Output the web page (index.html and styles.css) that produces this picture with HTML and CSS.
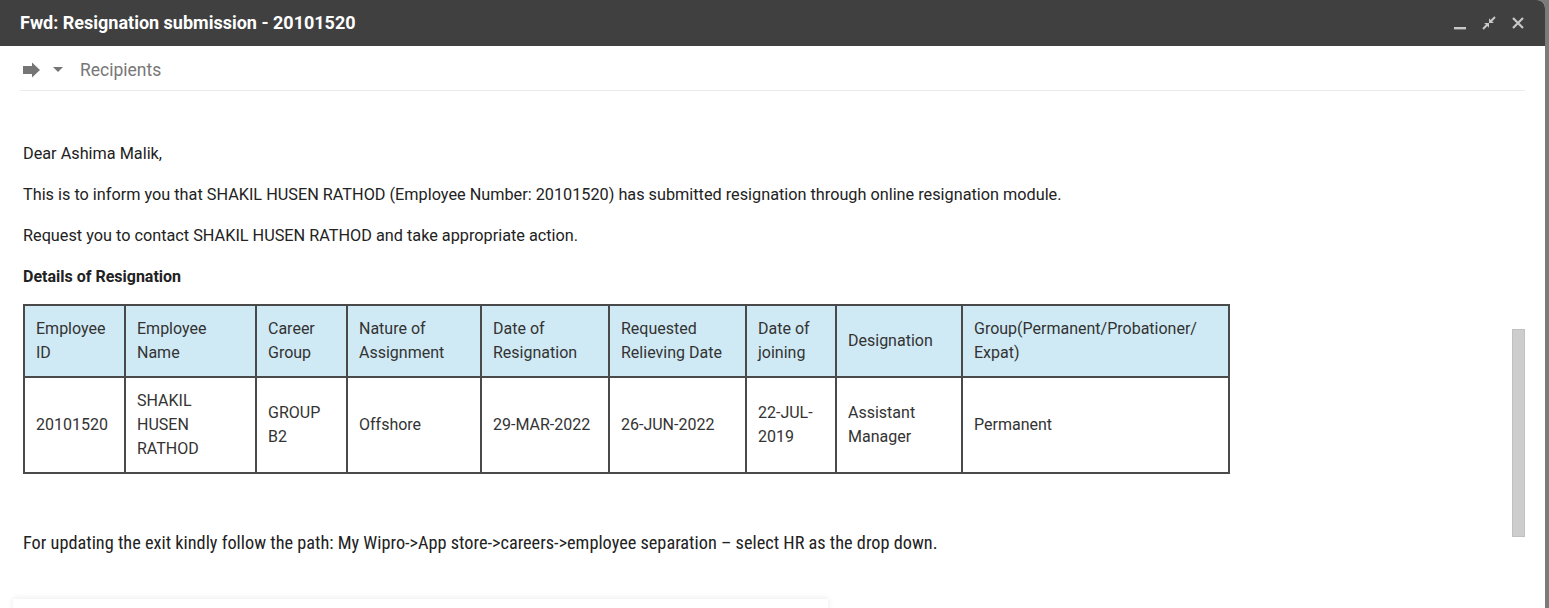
FILE: index.html
```html
<!DOCTYPE html>
<html>
<head>
<meta charset="utf-8">
<link rel="stylesheet" href="styles.css">
</head>
<body>
<div class="window">
  <div class="titlebar">
    <div class="title">Fwd: Resignation submission - 20101520</div>
    <div class="winctl">
      <svg class="ic-min" width="14" height="14" viewBox="0 0 14 14"><rect x="1" y="11" width="12" height="2.4" fill="#c8c8c8"/></svg>
      <svg class="ic-exit" width="14" height="14" viewBox="0 0 14 14"><path d="M13 1 L8.8 5.2" stroke="#c8c8c8" stroke-width="2"/><path d="M7 2.2 L7 7 L11.8 7 Z" fill="#c8c8c8"/><path d="M1 13 L5.2 8.8" stroke="#c8c8c8" stroke-width="2"/><path d="M2.2 7 L7 7 L7 11.8 Z" fill="#c8c8c8"/></svg>
      <svg class="ic-close" width="14" height="14" viewBox="0 0 14 14"><path d="M2 2 L12 12 M12 2 L2 12" stroke="#c8c8c8" stroke-width="2.2"/></svg>
    </div>
  </div>
  <div class="compose">
    <div class="recipients">
      <svg class="ic-fwd" width="20" height="16" viewBox="0 0 20 16"><path d="M1 4 L10 4 L10 0.5 L18 8 L10 15.5 L10 12 L1 12 Z" fill="#757575"/></svg>
      <svg class="ic-caret" width="10" height="6" viewBox="0 0 10 6"><path d="M0 0 L10 0 L5 5 Z" fill="#757575"/></svg>
      <span class="rcpt-label">Recipients</span>
    </div>
    <div class="body-area">
      <div class="message">
        <p>Dear Ashima Malik,</p>
        <p>This is to inform you that SHAKIL HUSEN RATHOD (Employee Number: 20101520) has submitted resignation through online resignation module.</p>
        <p>Request you to contact SHAKIL HUSEN RATHOD and take appropriate action.</p>
        <p class="bold">Details of Resignation</p>
        <table class="details">
          <colgroup>
            <col class="c1"><col class="c2"><col class="c3"><col class="c4"><col class="c5"><col class="c6"><col class="c7"><col class="c8"><col class="c9">
          </colgroup>
          <tr class="head">
            <td>Employee<br>ID</td>
            <td>Employee<br>Name</td>
            <td>Career<br>Group</td>
            <td>Nature of<br>Assignment</td>
            <td>Date of<br>Resignation</td>
            <td>Requested<br>Relieving Date</td>
            <td>Date of<br>joining</td>
            <td>Designation</td>
            <td>Group(Permanent/Probationer/<br>Expat)</td>
          </tr>
          <tr>
            <td>20101520</td>
            <td>SHAKIL<br>HUSEN<br>RATHOD</td>
            <td>GROUP<br>B2</td>
            <td>Offshore</td>
            <td>29-MAR-2022</td>
            <td>26-JUN-2022</td>
            <td>22-JUL-<br>2019</td>
            <td>Assistant<br>Manager</td>
            <td>Permanent</td>
          </tr>
        </table>
        <p class="path">For updating the exit kindly follow the path: My Wipro-&gt;App store-&gt;careers-&gt;employee separation – select HR as the drop down.</p>
        <div class="next-card"></div>
      </div>
      <div class="scrolltrack"><div class="thumb"></div></div>
    </div>
  </div>
</div>
</body>
</html>
```
FILE: styles.css
```css
html, body {
  margin: 0;
  padding: 0;
  height: 608px;
  overflow: hidden;
}
body {
  background: #7b7b7b;
  font-family: Roboto, "Liberation Sans", sans-serif;
}
.window {
  width: 1545px;
  height: 608px;
  background: #fff;
  display: flex;
  flex-direction: column;
  border-top-right-radius: 8px;
  overflow: hidden;
}
.titlebar {
  height: 46px;
  flex: none;
  background: #404040;
  display: flex;
  align-items: center;
  justify-content: space-between;
  padding: 0 20px 0 20px;
}
.title {
  color: #fff;
  font-weight: 700;
  font-size: 18px;
  margin-top: -1px;
}
.winctl {
  display: flex;
  align-items: center;
  gap: 15px;
}
.compose {
  flex: 1;
  display: flex;
  flex-direction: column;
  padding: 0 20px;
}
.recipients {
  height: 45px;
  border-bottom: 1px solid #ececec;
  display: flex;
  align-items: center;
  padding-left: 2px;
  padding-top: 3px;
  box-sizing: border-box;
}
.ic-fwd { margin-right: 11px; }
.ic-caret { margin-right: 17px; }
.rcpt-label {
  color: #777;
  font-size: 17.5px;
}
.body-area {
  flex: 1;
  display: flex;
}
.message {
  flex: 1;
  padding: 53px 0 0 3px;
  color: #222;
  font-size: 16.25px;
  line-height: 20px;
}
.message p {
  margin: 0 0 21px;
}
.message p.bold {
  font-size: 16px;
  font-weight: 700;
  margin-bottom: 17px;
}
table.details {
  border: 1px solid #4a4a4a;
  border-spacing: 0;
  table-layout: fixed;
  width: 1205px;
  color: #333;
  font-size: 16px;
  line-height: 24px;
}
table.details td {
  border: 1px solid #4a4a4a;
  padding: 11px 11px;
  vertical-align: middle;
  white-space: nowrap;
}
table.details tr.head td {
  background: #cfeaf5;
}
col.c1 { width: 101px; }
col.c2 { width: 131px; }
col.c3 { width: 91px; }
col.c4 { width: 134px; }
col.c5 { width: 128px; }
col.c6 { width: 137px; }
col.c7 { width: 90px; }
col.c8 { width: 126px; }
col.c9 { width: 267px; }
.message p.path {
  margin-top: 59px;
  font-family: Roboto, sans-serif;
  font-size: 18.3px;
  font-stretch: 83.3%;
  color: #222;
}
.next-card {
  width: 815px;
  height: 40px;
  margin-top: 46px;
  margin-left: -10px;
  box-shadow: 0 -1px 6px rgba(0,0,0,0.08);
  background: #fff;
}
.scrolltrack {
  width: 13px;
  flex: none;
  padding-top: 238px;
}
.thumb {
  width: 11px;
  height: 206px;
  background: #cdcdcd;
  border: 1px solid #c0c0c0;
}
```
